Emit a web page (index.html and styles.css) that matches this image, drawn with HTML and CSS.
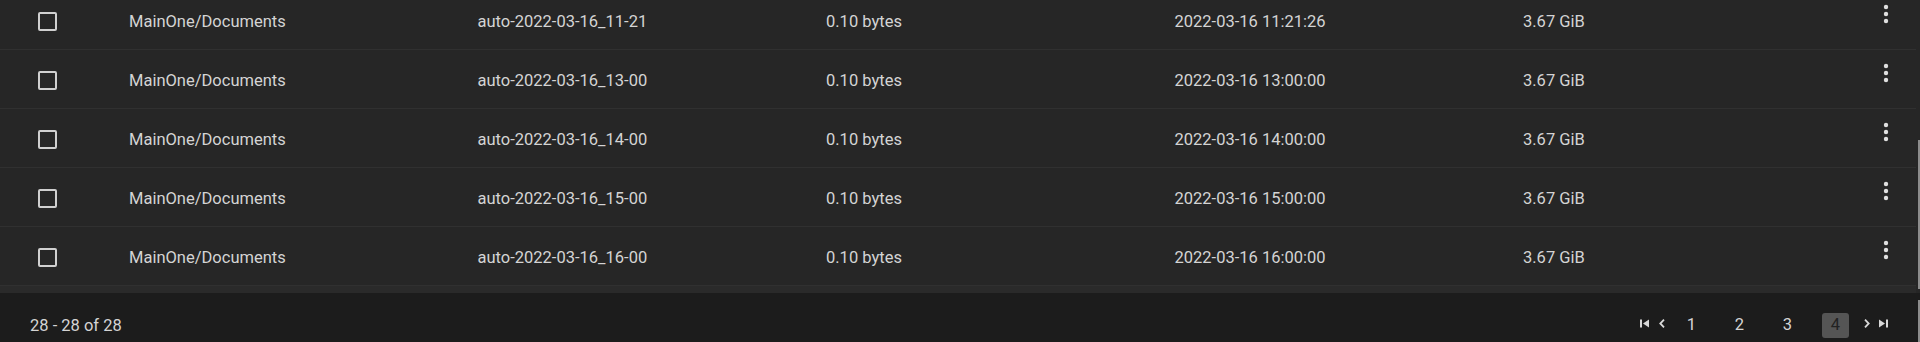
FILE: index.html
```html
<!DOCTYPE html>
<html lang="en">
<head>
<meta charset="utf-8">
<title>Snapshots</title>
<link rel="stylesheet" href="styles.css">
</head>
<body>
<div class="page">
  <div class="table">
    <div class="rows">
      <div class="row">
        <div class="cell-check"><span class="checkbox"></span></div>
        <div class="cell">MainOne/Documents</div>
        <div class="cell">auto-2022-03-16_11-21</div>
        <div class="cell">0.10 bytes</div>
        <div class="cell">2022-03-16 11:21:26</div>
        <div class="cell">3.67 GiB</div>
        <div class="cell-menu"><svg class="kebab" viewBox="0 0 6 20" width="6" height="20"><circle cx="3" cy="3" r="2.2"/><circle cx="3" cy="10" r="2.2"/><circle cx="3" cy="17" r="2.2"/></svg></div>
      </div>
      <div class="row">
        <div class="cell-check"><span class="checkbox"></span></div>
        <div class="cell">MainOne/Documents</div>
        <div class="cell">auto-2022-03-16_13-00</div>
        <div class="cell">0.10 bytes</div>
        <div class="cell">2022-03-16 13:00:00</div>
        <div class="cell">3.67 GiB</div>
        <div class="cell-menu"><svg class="kebab" viewBox="0 0 6 20" width="6" height="20"><circle cx="3" cy="3" r="2.2"/><circle cx="3" cy="10" r="2.2"/><circle cx="3" cy="17" r="2.2"/></svg></div>
      </div>
      <div class="row">
        <div class="cell-check"><span class="checkbox"></span></div>
        <div class="cell">MainOne/Documents</div>
        <div class="cell">auto-2022-03-16_14-00</div>
        <div class="cell">0.10 bytes</div>
        <div class="cell">2022-03-16 14:00:00</div>
        <div class="cell">3.67 GiB</div>
        <div class="cell-menu"><svg class="kebab" viewBox="0 0 6 20" width="6" height="20"><circle cx="3" cy="3" r="2.2"/><circle cx="3" cy="10" r="2.2"/><circle cx="3" cy="17" r="2.2"/></svg></div>
      </div>
      <div class="row">
        <div class="cell-check"><span class="checkbox"></span></div>
        <div class="cell">MainOne/Documents</div>
        <div class="cell">auto-2022-03-16_15-00</div>
        <div class="cell">0.10 bytes</div>
        <div class="cell">2022-03-16 15:00:00</div>
        <div class="cell">3.67 GiB</div>
        <div class="cell-menu"><svg class="kebab" viewBox="0 0 6 20" width="6" height="20"><circle cx="3" cy="3" r="2.2"/><circle cx="3" cy="10" r="2.2"/><circle cx="3" cy="17" r="2.2"/></svg></div>
      </div>
      <div class="row">
        <div class="cell-check"><span class="checkbox"></span></div>
        <div class="cell">MainOne/Documents</div>
        <div class="cell">auto-2022-03-16_16-00</div>
        <div class="cell">0.10 bytes</div>
        <div class="cell">2022-03-16 16:00:00</div>
        <div class="cell">3.67 GiB</div>
        <div class="cell-menu"><svg class="kebab" viewBox="0 0 6 20" width="6" height="20"><circle cx="3" cy="3" r="2.2"/><circle cx="3" cy="10" r="2.2"/><circle cx="3" cy="17" r="2.2"/></svg></div>
      </div>
      <div class="band"></div>
    </div>
    <div class="thumb thumb-table"></div>
  </div>
  <div class="footer">
    <div class="range">28 - 28 of 28</div>
    <div class="pager">
      <svg class="pg-icon pg-first" viewBox="0 0 9 9" width="9" height="9"><rect x="0" y="0.5" width="2" height="8"/><polygon points="9,0.5 3,4.5 9,8.5"/></svg>
      <svg class="pg-icon pg-prev" viewBox="0 0 6 9" width="6" height="9"><polyline points="5,0.7 1.3,4.5 5,8.3"/></svg>
      <span class="pg-num">1</span>
      <span class="pg-num">2</span>
      <span class="pg-num">3</span>
      <span class="pg-num pg-active">4</span>
      <svg class="pg-icon pg-next" viewBox="0 0 6 9" width="6" height="9"><polyline points="1,0.7 4.7,4.5 1,8.3"/></svg>
      <svg class="pg-icon pg-last" viewBox="0 0 9 9" width="9" height="9"><polygon points="0,0.5 6,4.5 0,8.5"/><rect x="7" y="0.5" width="2" height="8"/></svg>
    </div>
    <div class="thumb thumb-footer"></div>
  </div>
</div>
</body>
</html>
```

FILE: styles.css
```css
html, body {
  margin: 0;
  padding: 0;
}

body {
  width: 1920px;
  height: 342px;
  overflow: hidden;
  background: #262626;
  font-family: Roboto, "Liberation Sans", Arial, sans-serif;
  font-size: 16.5px;
  color: #d4d4d4;
}

.page {
  display: flex;
  flex-direction: column;
  width: 1920px;
}

.table {
  position: relative;
  flex: 0 0 293px;
  height: 293px;
  overflow: hidden;
  background: #262626;
}

.rows {
  margin-top: -9px;
  width: 1916px;
}

.row {
  display: grid;
  grid-template-columns: 129px repeat(5, 348.5px) 1fr;
  align-items: center;
  height: 58px;
  border-bottom: 1px solid #303030;
}

.cell {
  padding-top: 3px;
  white-space: nowrap;
}

.cell-check {
  display: flex;
  align-items: center;
  padding-left: 38px;
  padding-top: 2px;
}

.checkbox {
  display: block;
  width: 15px;
  height: 15px;
  border: 2px solid #d0d0d0;
  border-radius: 2px;
}

.cell-menu {
  align-self: start;
  padding-top: 13px;
  padding-left: 11.5px;
}

.kebab {
  display: block;
  fill: #e0e0e0;
}

.band {
  height: 7px;
  background: #2a2a2a;
}

.thumb {
  position: absolute;
  right: 0;
  width: 2px;
  background: #8c8c8c;
}

.thumb-table {
  top: 140px;
  height: 149px;
}

.thumb-footer {
  top: 7px;
  bottom: 0;
}

.footer {
  position: relative;
  flex: 0 0 64px;
  height: 64px;
  display: flex;
  align-items: center;
  justify-content: space-between;
  padding: 0 32px 0 30px;
  background: #1c1c1c;
}

.range {
  white-space: nowrap;
}

.pager {
  display: flex;
  align-items: center;
}

.pg-icon {
  display: block;
  fill: #d8d8d8;
  margin-bottom: 4px;
}

.pg-prev, .pg-next {
  fill: none;
  stroke: #d8d8d8;
  stroke-width: 1.8;
}

.pg-prev {
  margin-left: 10px;
  margin-right: 13.5px;
}

.pg-next {
  margin-left: 15px;
  margin-right: 9px;
}

.pg-num {
  display: flex;
  align-items: center;
  justify-content: center;
  width: 27px;
  height: 25px;
  margin-right: 21px;
  border-radius: 3px;
  line-height: 1;
}

.pg-num.pg-active {
  margin-right: 0;
  background: #555555;
  color: #222222;
}
```
